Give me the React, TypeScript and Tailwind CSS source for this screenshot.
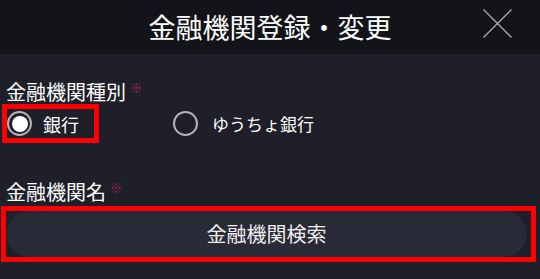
import React from 'react'

const font = { fontFamily: '"Noto Sans CJK JP", "Noto Sans", sans-serif' }

const Required = () => (
    <span className="ml-[4px] text-[12px] leading-none text-[#b3245f] relative -top-[4px]">※</span>
)

const Radio = ({ checked }: { checked: boolean }) => (
    <span className="flex items-center justify-center w-[25px] h-[25px] rounded-full border-2 border-[#b4b4b8] shrink-0">
        {checked && <span className="w-[16px] h-[16px] rounded-full bg-white"></span>}
    </span>
)

const App = () => {
    return (
        <div className="w-[540px] h-[279px] bg-[#1e1f29] text-white overflow-hidden" style={font}>
            <div className="relative h-[54px] bg-[#131419] flex items-center justify-center">
                <h1 className="text-[27px] leading-none tracking-[0px] pb-[2px]">金融機関登録・変更</h1>
                <button className="absolute left-[483px] top-[9px] w-[29px] h-[29px]">
                    <svg width="29" height="29" viewBox="0 0 29 29">
                        <path d="M0.5 0.5 L28.5 28.5 M28.5 0.5 L0.5 28.5" stroke="#a9a9ad" strokeWidth="1.3" fill="none" />
                    </svg>
                </button>
            </div>
            <div className="pt-[25px]">
                <div className="pl-[6px] text-[20px] leading-[25px] flex items-center">
                    金融機関種別<Required />
                </div>
                <div className="flex items-center">
                    <div className="ml-[2px] w-[97px] h-[39px] border-[5px] border-[#ff0000] flex items-center">
                        <Radio checked={true} />
                        <span className="ml-[11px] text-[18px] leading-none">銀行</span>
                    </div>
                    <div className="ml-[74px] flex items-center">
                        <Radio checked={false} />
                        <span className="ml-[14px] text-[17px] leading-none">ゆうちょ銀行</span>
                    </div>
                </div>
                <div className="mt-[36px] pl-[6px] text-[20px] leading-[25px] flex items-center">
                    金融機関名<Required />
                </div>
                <div className="mt-[2px] ml-[1px] w-[535px] h-[56px] border-[5px] border-[#ff0000]">
                    <button className="w-[521px] h-full rounded-full bg-[#282a37] text-[20px] leading-none text-[#f0f0f0]">
                        金融機関検索
                    </button>
                </div>
            </div>
        </div>
    )
}

export default App
